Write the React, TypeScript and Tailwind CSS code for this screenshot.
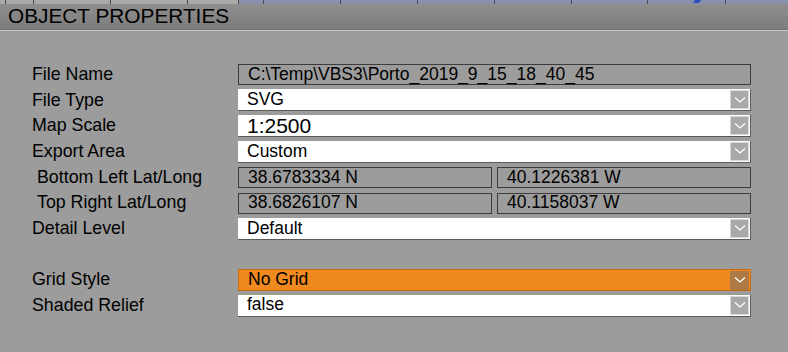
import React from "react";

const font = { fontFamily: '"Liberation Sans", Arial, sans-serif' };

function Chevron() {
  return (
    <svg width="12" height="8" viewBox="0 0 12 8" className="block">
      <path d="M1 1.5 L6 6 L11 1.5" fill="none" stroke="#ffffff" strokeWidth="1.3" />
    </svg>
  );
}

function ReadOnly({ text, className = "" }: { text: string; className?: string }) {
  return (
    <div
      className={`h-[21px] border border-[#3c3c3c] flex items-center pl-[9px] text-[17.5px] leading-none text-black ${className}`}
    >
      {text}
    </div>
  );
}

function Select({
  text,
  orange = false,
  big = false,
}: {
  text: string;
  orange?: boolean;
  big?: boolean;
}) {
  return (
    <div
      className={`h-[22px] flex items-center ${
        orange
          ? "bg-[#ee8a1f] border border-[#c76a10]"
          : "bg-white border-b border-r border-[#5a5a5a]"
      }`}
    >
      <div
        className={`flex-1 pl-[9px] leading-none text-black ${
          big ? "text-[21px]" : "text-[17.5px]"
        }`}
      >
        {text}
      </div>
      <div
        className={`w-[19px] h-[19px] mr-[1px] flex items-center justify-center ${
          orange
            ? "bg-[#ad7a45]"
            : "bg-[#a9a9a9] border border-[#d8d8d8]"
        }`}
      >
        <Chevron />
      </div>
    </div>
  );
}

function Row({
  label,
  indent = false,
  children,
}: {
  label: string;
  indent?: boolean;
  children?: React.ReactNode;
}) {
  return (
    <div className="h-[21.67px] flex items-center">
      <div
        className={`w-[206px] text-[17.8px] leading-none text-black ${
          indent ? "pl-[5px]" : ""
        }`}
      >
        {label}
      </div>
      <div className="w-[513px]">{children}</div>
    </div>
  );
}

export default function App() {
  const tabs = [5, 33, 110, 187, 238, 263, 340, 417, 494, 571, 647, 725];
  return (
    <div className="w-[788px] h-[352px] bg-[#9c9c9c] overflow-hidden relative" style={font}>
      {/* tab strip */}
      <div className="h-[4px] flex">
        <div className="w-[238px] bg-[#a9a9a9]" />
        <div className="flex-1 bg-[#8790ad]" />
      </div>
      {tabs.map((x) => (
        <div
          key={x}
          className="absolute top-0 h-[4px] w-[1px] bg-[#4a4a4a]"
          style={{ left: x }}
        />
      ))}
      <div className="absolute top-0 left-[694px] h-[3px] w-[6px] bg-[#2a50c0] -skew-x-[40deg]" />
      {/* header */}
      <div className="h-[26px] bg-gradient-to-b from-[#8e8e8e] to-[#7d7d7d] flex items-center pl-[8px] border-b border-[#777]">
        <span className="text-[20.8px] leading-none text-black">
          OBJECT PROPERTIES
        </span>
      </div>
      <div className="h-[1px] bg-[#c4c4c4]" />
      {/* body */}
      <div className="pl-[32px] pt-[33px] flex flex-col gap-[4px]">
        <Row label="File Name">
          <ReadOnly text="C:\Temp\VBS3\Porto_2019_9_15_18_40_45" />
        </Row>
        <Row label="File Type">
          <Select text="SVG" />
        </Row>
        <Row label="Map Scale">
          <Select text="1:2500" big />
        </Row>
        <Row label="Export Area">
          <Select text="Custom" />
        </Row>
        <Row label="Bottom Left Lat/Long" indent>
          <div className="flex gap-[5px]">
            <ReadOnly text="38.6783334 N" className="flex-1" />
            <ReadOnly text="40.1226381 W" className="flex-1" />
          </div>
        </Row>
        <Row label="Top Right Lat/Long" indent>
          <div className="flex gap-[5px]">
            <ReadOnly text="38.6826107 N" className="flex-1" />
            <ReadOnly text="40.1158037 W" className="flex-1" />
          </div>
        </Row>
        <Row label="Detail Level">
          <Select text="Default" />
        </Row>
        <Row label="" />
        <Row label="Grid Style">
          <Select text="No Grid" orange />
        </Row>
        <Row label="Shaded Relief">
          <Select text="false" />
        </Row>
      </div>
    </div>
  );
}
